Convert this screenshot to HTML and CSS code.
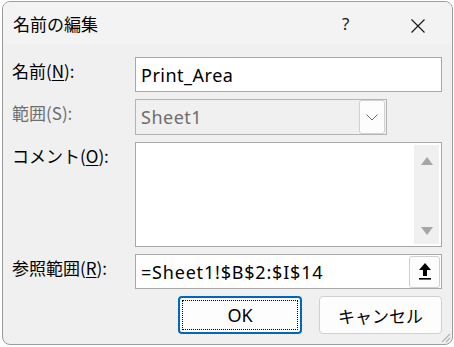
FILE: index.html
```html
<!DOCTYPE html>
<html lang="ja">
<head>
    <meta charset="UTF-8">
    <title>名前の編集</title>
    <link rel="stylesheet" href="styles.css">
</head>
<body>

    <div class="window">
        <div class="titlebar">
            <div class="title">名前の編集</div>
            <div class="help">?</div>
            <div class="close">
                <svg width="16" height="16" viewBox="0 0 16 16"><path d="M1.5 1.5 L14.5 14.5 M14.5 1.5 L1.5 14.5" stroke="#1a1a1a" stroke-width="1.2" fill="none"/></svg>
            </div>
        </div>

        <div class="content">
            <div class="form">
                <div class="label">名前(<u>N</u>):</div>
                <div class="field">Print_Area</div>

                <div class="label disabled">範囲(S):</div>
                <div class="field select">
                    <span>Sheet1</span>
                    <span class="drop">
                        <svg width="12" height="7" viewBox="0 0 12 7"><path d="M0.5 0.5 L6 6 L11.5 0.5" stroke="#6a6a6a" stroke-width="1" fill="none"/></svg>
                    </span>
                </div>

                <div class="label">コメント(<u>O</u>):</div>
                <div class="field memo">
                    <div class="scroll">
                        <svg width="12" height="8" viewBox="0 0 12 8"><path d="M0 8 L6 0 L12 8 Z" fill="#a6a6a6"/></svg>
                        <svg width="12" height="8" viewBox="0 0 12 8"><path d="M0 0 L6 8 L12 0 Z" fill="#a6a6a6"/></svg>
                    </div>
                </div>

                <div class="label">参照範囲(<u>R</u>):</div>
                <div class="field ref">
                    <span>=Sheet1!$B$2:$I$14</span>
                    <span class="pick">
                        <svg width="14" height="18" viewBox="0 0 14 18"><path d="M7 0 L13 7 L9 7 L9 13 L5 13 L5 7 L1 7 Z" fill="#000"/><rect x="1" y="15" width="12" height="1.6" fill="#000"/></svg>
                    </span>
                </div>
            </div>

            <div class="buttons">
                <div class="btn primary"><span class="focus">OK</span></div>
                <div class="btn">キャンセル</div>
            </div>
        </div>

        <svg class="grip" width="12" height="12" viewBox="0 0 12 12"><path d="M11 3 L3 11 M11 7 L7 11" stroke="#b5b5b5" stroke-width="1.2"/></svg>
    </div>

</body>
</html>
```

FILE: styles.css
```css
body {
    margin: 0;
    padding: 1px 2px 0 2px;
    background: #fff;
    font-family: "Noto Sans CJK JP", sans-serif;
    color: #000;
}

.window {
    position: relative;
    width: 449px;
    height: 342px;
    border: 1px solid #9c9c9c;
    border-radius: 8px;
    background: #f0f0f0;
    overflow: hidden;
}

.titlebar {
    display: flex;
    align-items: center;
    height: 42px;
    background: #f3f3f3;
    padding-left: 10px;
}

.title {
    font-size: 17px;
    flex: 1;
}

.help {
    width: 20px;
    font-family: "Noto Sans", sans-serif;
    font-size: 17px;
    color: #1a1a1a;
    margin-right: 48px;
}

.close {
    width: 16px;
    height: 16px;
    margin-right: 26px;
}

.content {
    padding: 13px 10px 0 9px;
}

.form {
    display: grid;
    grid-template-columns: 123px 1fr;
    grid-template-rows: 35px 36px 105px 35px;
    row-gap: 7px;
}

.label {
    font-size: 17px;
    padding-top: 1px;
    line-height: 25px;
}

.label u {
    text-underline-offset: 2px;
}

.disabled {
    color: #6d6d6d;
}

.field {
    display: flex;
    align-items: center;
    background: #fff;
    border: 1px solid #a8a8a8;
    padding-left: 5px;
    font-family: "Noto Sans", sans-serif;
    font-size: 18px;
    letter-spacing: 0.5px;
}

.select {
    width: 244px;
    background: #f0f0f0;
    border-color: #b4b4b4;
    color: #6d6d6d;
    justify-content: space-between;
    padding-right: 1px;
}

.drop {
    display: flex;
    align-items: center;
    justify-content: center;
    width: 24px;
    height: 32px;
    background: #fdfdfd;
    border: 1px solid #d0d0d0;
    border-radius: 3px;
}

.memo {
    justify-content: flex-end;
    align-items: stretch;
    padding: 2px;
}

.scroll {
    width: 25px;
    background: #f0f0f0;
    display: flex;
    flex-direction: column;
    justify-content: space-between;
    align-items: center;
    padding: 12px 0 9px;
}

.ref {
    justify-content: space-between;
    padding-right: 1px;
    letter-spacing: 0.8px;
}

.pick {
    display: flex;
    align-items: center;
    justify-content: center;
    width: 29px;
    height: 30px;
    background: #fdfdfd;
    border: 1px solid #d0d0d0;
    border-radius: 3px;
}

.buttons {
    display: flex;
    justify-content: flex-end;
    gap: 17px;
    margin-top: 7px;
}

.btn {
    width: 123px;
    height: 38px;
    box-sizing: border-box;
    display: flex;
    align-items: center;
    justify-content: center;
    background: #fdfdfd;
    border: 1px solid #d0d0d0;
    border-radius: 4px;
    font-size: 17px;
}

.btn.primary {
    width: 124px;
    border: 2px solid #0067c0;
    padding: 2px;
}

.focus {
    flex: 1;
    align-self: stretch;
    display: flex;
    align-items: center;
    justify-content: center;
    border: 1px dotted #000;
    font-family: "Noto Sans", sans-serif;
    font-size: 18px;
}

.grip {
    position: absolute;
    right: 1px;
    bottom: 1px;
}
```
